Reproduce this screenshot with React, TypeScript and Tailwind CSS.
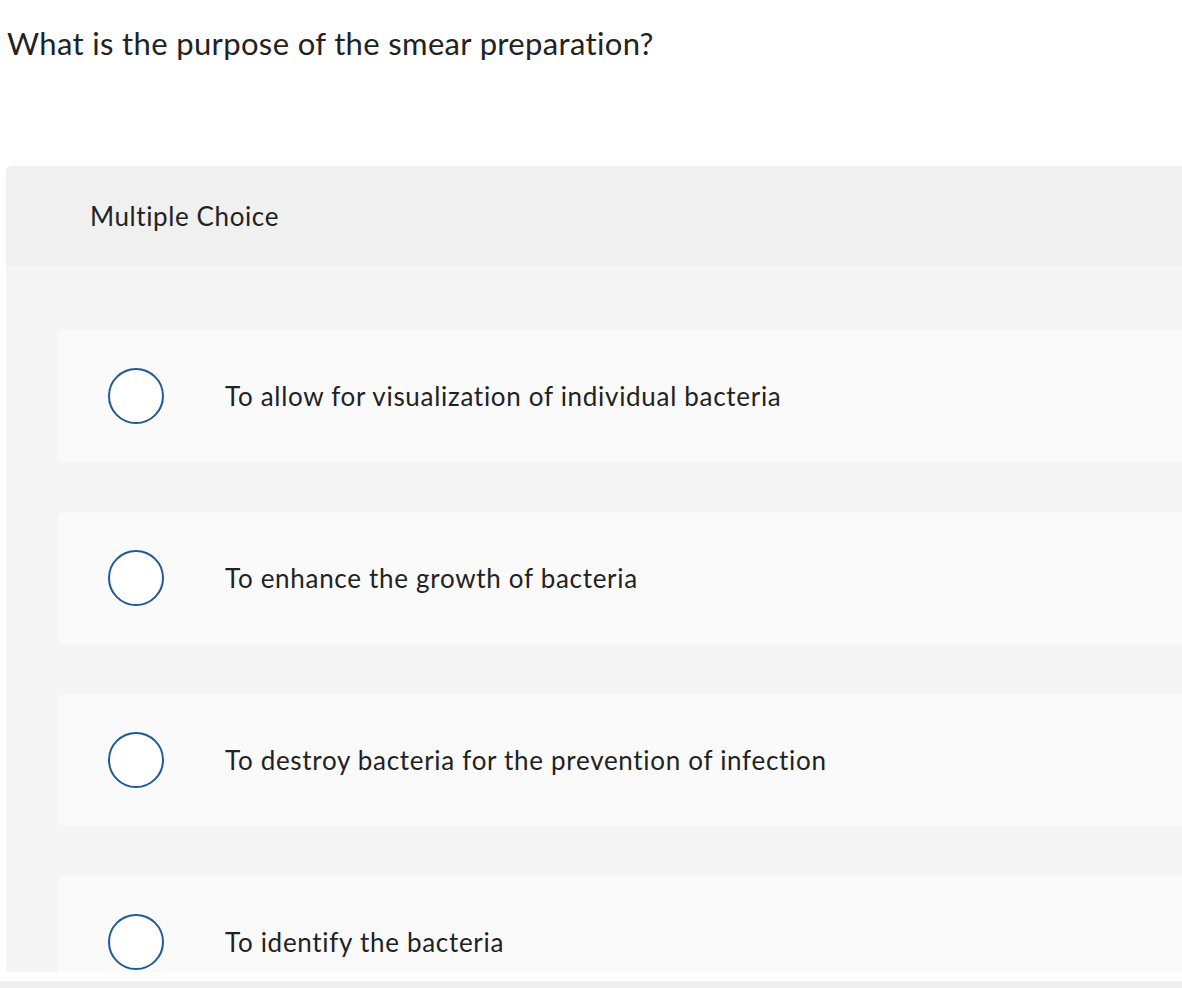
import React from "react";

const options = [
  "To allow for visualization of individual bacteria",
  "To enhance the growth of bacteria",
  "To destroy bacteria for the prevention of infection",
  "To identify the bacteria",
];

export default function App() {
  return (
    <div className="w-[1182px] h-[988px] overflow-hidden bg-white text-[#222222]" style={{ fontFamily: "Lato, 'Open Sans', sans-serif" }}>
      <div className="h-[166px] pl-[7px] pt-[26px]">
        <h1 className="text-[31px] leading-[34px] font-normal tracking-[0.35px]">What is the purpose of the smear preparation?</h1>
      </div>
      <div className="ml-[6px] h-[806px] overflow-hidden rounded-tl-[6px] bg-[#f5f5f5]">
        <div className="flex h-[100px] items-center bg-[#f0f0f0] pl-[84px]">
          <span className="text-[26px] tracking-[0.6px]">Multiple Choice</span>
        </div>
        <div className="flex flex-col gap-[50px] pl-[52px] pt-[64px]">
          {options.map((o) => (
            <div key={o} className="flex h-[132px] shrink-0 items-center rounded-l-[6px] bg-[#fafafa] pl-[50px]">
              <div className="h-[56px] w-[56px] shrink-0 rounded-full border-2 border-[#1f5a93] bg-white" />
              <span className="ml-[61px] text-[26px] tracking-[0.7px]">{o}</span>
            </div>
          ))}
        </div>
      </div>
      <div className="h-[9px] bg-white" />
      <div className="h-[7px] bg-[#efefef]" />
    </div>
  );
}
